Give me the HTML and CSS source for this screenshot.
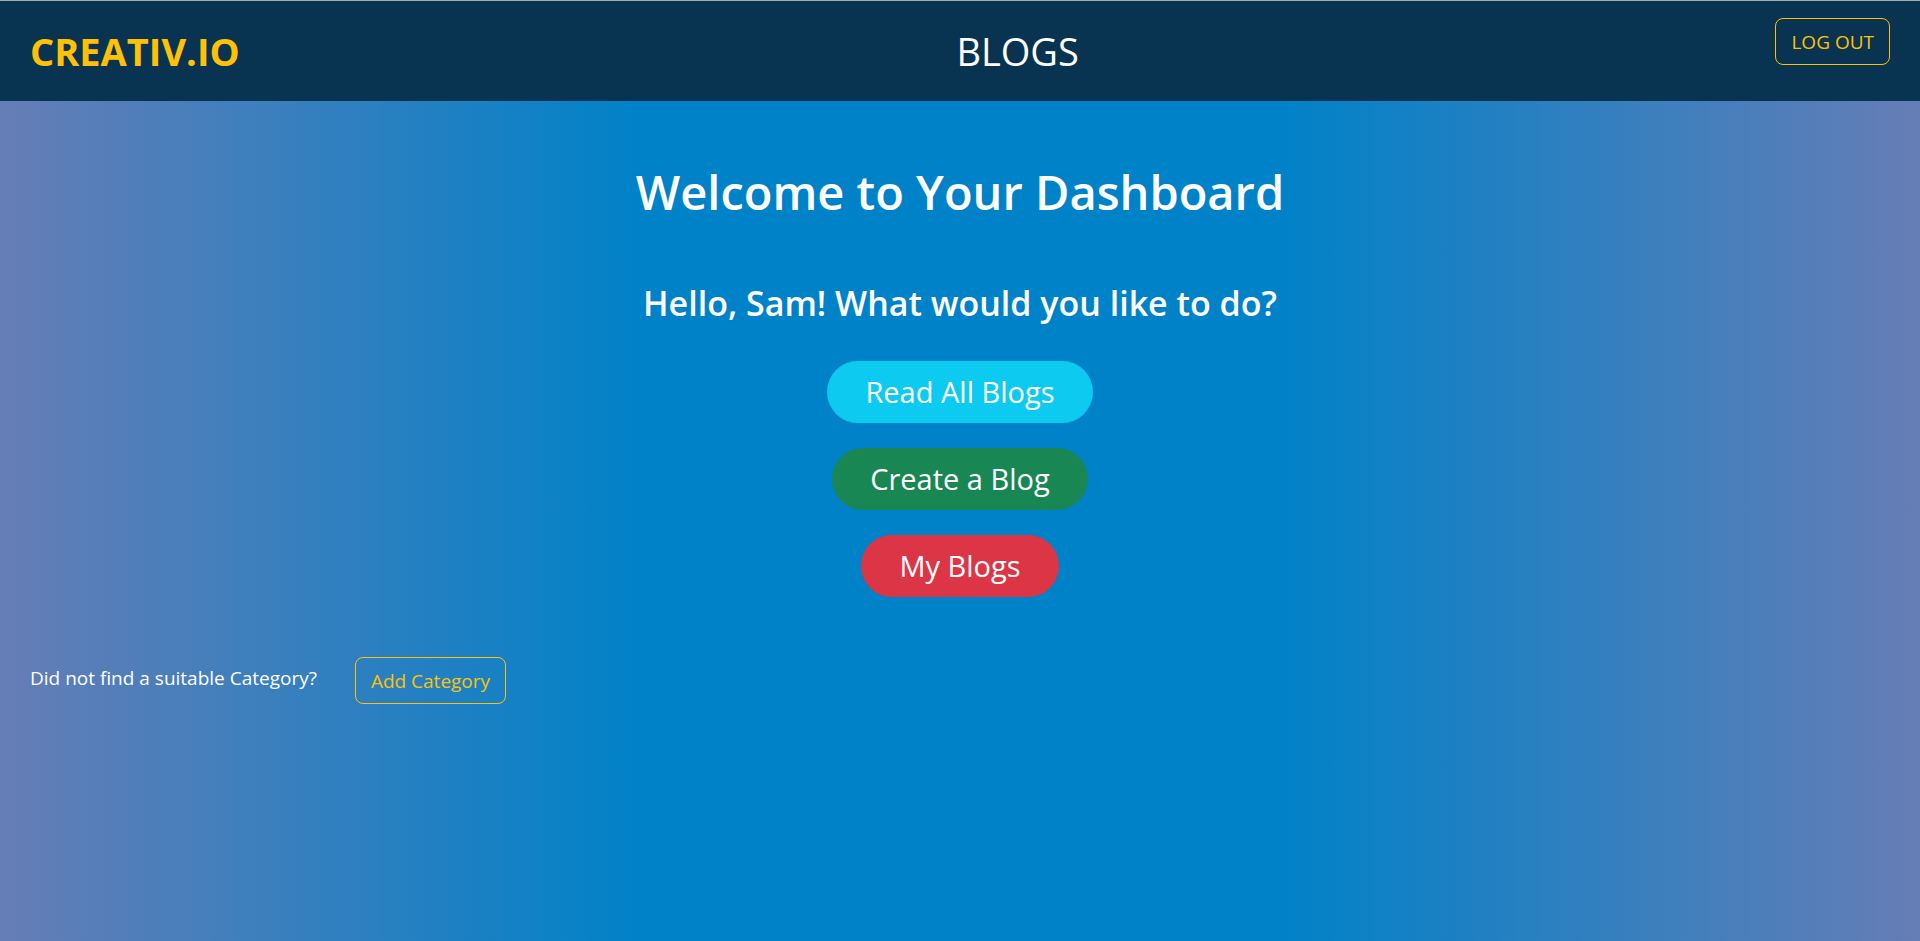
FILE: index.html
```html
<!DOCTYPE html>
<html lang="en">
<head>
  <meta charset="utf-8">
  <meta name="viewport" content="width=device-width, initial-scale=1">
  <title>Dashboard</title>
  <link rel="stylesheet" href="styles.css">
</head>
<body>
  <header class="navbar">
    <a class="brand" href="#">CREATIV.IO</a>
    <span class="page-name">BLOGS</span>
    <button class="btn btn-outline" type="button">LOG OUT</button>
  </header>
  <main class="dashboard">
    <h1 class="title">Welcome to Your Dashboard</h1>
    <h2 class="greeting">Hello, Sam! What would you like to do?</h2>
    <nav class="actions">
      <a class="pill pill-info" href="#">Read All Blogs</a>
      <a class="pill pill-success" href="#">Create a Blog</a>
      <a class="pill pill-danger" href="#">My Blogs</a>
    </nav>
    <section class="category">
      <p class="category-text">Did not find a suitable Category?</p>
      <button class="btn btn-outline" type="button">Add Category</button>
    </section>
  </main>
</body>
</html>
```
FILE: styles.css
```css
* {
  box-sizing: border-box;
}

body {
  margin: 0;
  min-height: 100vh;
  font-family: "Segoe UI", "Open Sans", "Noto Sans", sans-serif;
  font-size: 19px;
  line-height: 30px;
  color: #fff;
  background: linear-gradient(to right, #667db6, #0082c8, #0082c8, #667db6);
}

.navbar {
  display: flex;
  justify-content: space-between;
  align-items: flex-start;
  padding: 17px 30px 16px;
  border-top: 1px solid #a9a9a9;
  background: #083351;
}

.brand {
  margin-right: 20px;
  font-size: 38px;
  font-weight: 700;
  line-height: 67px;
  color: #ffc107;
  text-decoration: none;
}

.page-name {
  font-size: 38px;
  line-height: 67px;
}

.btn {
  padding: 9px 15px 7px;
  border: 1px solid;
  border-radius: 8px;
  font: inherit;
  line-height: 29px;
  background: transparent;
  cursor: pointer;
}

.btn-outline {
  color: #ffc107;
}

.dashboard {
  padding: 61px 30px;
}

.title,
.greeting {
  margin: 0;
  font-weight: 600;
  text-align: center;
}

.title {
  font-size: 47px;
  line-height: 60px;
}

.greeting {
  margin-top: 60px;
  font-size: 34px;
  line-height: 42px;
}

.actions {
  display: flex;
  flex-direction: column;
  align-items: center;
  gap: 25px;
  margin-top: 37px;
}

.pill {
  padding: 8px 38px 9px;
  border-radius: 32px;
  font-size: 29px;
  line-height: 45px;
  color: #fff;
  text-decoration: none;
}

.pill-info {
  background: #0dcaf0;
}

.pill-success {
  background: #198754;
}

.pill-danger {
  background: #dc3545;
}

.category {
  display: flex;
  align-items: flex-start;
  gap: 38px;
  margin-top: 60px;
}

.category-text {
  margin: 6px 0 0;
}
```
